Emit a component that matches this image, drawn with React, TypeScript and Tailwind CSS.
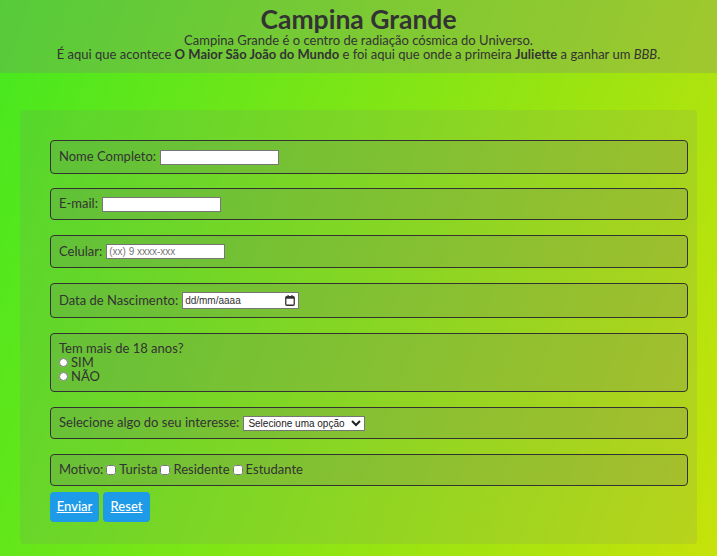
export default function App() {
  const box =
    "border border-[#333] rounded-[4px] bg-[rgba(110,110,110,0.2)] px-2 flex items-center";
  const field =
    "ml-1 w-[119px] h-[15px] bg-white border border-[#767676] text-[10px] px-[2px] font-['Liberation_Sans',sans-serif]";

  return (
    <div className="min-h-screen bg-[linear-gradient(110deg,#46e81f,#c6e20a)] font-['Lato',sans-serif] text-[13px] text-[#333]">
      <header className="h-[73px] bg-[rgba(128,128,128,0.28)] flex flex-col items-center pt-[5px]">
        <h1 className="text-[26.5px] font-bold leading-[28px] text-[#333]">Campina Grande</h1>
        <p className="leading-[14px]">Campina Grande é o centro de radiação cósmica do Universo.</p>
        <p className="leading-[14px]">
          É aqui que acontece <b>O Maior São João do Mundo</b> e foi aqui que onde a primeira{" "}
          <b>Juliette</b> a ganhar um <i>BBB</i>.
        </p>
      </header>

      <form className="mx-[20px] mt-[37px] rounded-[4px] bg-[rgba(128,128,128,0.15)] pl-[30px] pr-[9px] pt-[30px] pb-[22px] flex flex-col">
        <div className={`${box} h-[34px]`}>
          <label>Nome Completo:</label>
          <input className={field} />
        </div>
        <div className={`${box} h-[32px] mt-[14px]`}>
          <label>E-mail:</label>
          <input className={field} />
        </div>
        <div className={`${box} h-[33px] mt-[15px]`}>
          <label>Celular:</label>
          <input placeholder="(xx) 9 xxxx-xxx" className={`${field} placeholder:text-[#757575]`} />
        </div>
        <div className={`${box} h-[35px] mt-[15px]`}>
          <label>Data de Nascimento:</label>
          <div className="ml-1 w-[117px] h-[17px] bg-white border border-[#767676] text-[10px] font-['Liberation_Sans',sans-serif] flex items-center justify-between px-[2px] text-[#333]">
            <span>dd/mm/aaaa</span>
            <svg width="10" height="11" viewBox="0 0 10 11" className="mr-[1px]">
              <rect x="0.75" y="1.75" width="8.5" height="8.5" rx="1" fill="none" stroke="#333" strokeWidth="1.3" />
              <rect x="0.75" y="1.75" width="8.5" height="2" fill="#333" />
              <rect x="2.5" y="0" width="1.2" height="2.5" fill="#333" />
              <rect x="6.3" y="0" width="1.2" height="2.5" fill="#333" />
            </svg>
          </div>
        </div>
        <div className="border border-[#333] rounded-[4px] bg-[rgba(110,110,110,0.2)] px-2 pt-[7px] h-[59px] mt-[15px] leading-[14px]">
          <p>Tem mais de 18 anos?</p>
          <label className="flex items-center gap-[3px]">
            <input type="radio" name="idade" className="w-[9px] h-[9px] m-0" />
            SIM
          </label>
          <label className="flex items-center gap-[3px]">
            <input type="radio" name="idade" className="w-[9px] h-[9px] m-0" />
            NÃO
          </label>
        </div>
        <div className={`${box} h-[32px] mt-[15px]`}>
          <label>Selecione algo do seu interesse:</label>
          <select className="ml-1 w-[122px] h-[15px] bg-white border border-[#767676] text-[10px] leading-[12px] text-[#222] font-['Liberation_Sans',sans-serif]">
            <option>Selecione uma opção</option>
          </select>
        </div>
        <div className={`${box} h-[32px] mt-[15px]`}>
          <label>Motivo:</label>
          <label className="flex items-center ml-[3px]">
            <input type="checkbox" className="w-[10px] h-[10px] mr-[3px]" />
            Turista
          </label>
          <label className="flex items-center ml-[3px]">
            <input type="checkbox" className="w-[10px] h-[10px] mr-[3px]" />
            Residente
          </label>
          <label className="flex items-center ml-[3px]">
            <input type="checkbox" className="w-[10px] h-[10px] mr-[3px]" />
            Estudante
          </label>
        </div>
        <div className="flex gap-[4px] mt-[6px]">
          <button type="button" className="w-[49px] h-[30px] rounded-[4px] bg-[#1e9be8] text-white underline font-medium">
            Enviar
          </button>
          <button type="button" className="w-[47px] h-[30px] rounded-[4px] bg-[#1e9be8] text-white underline font-medium">
            Reset
          </button>
        </div>
      </form>
    </div>
  );
}
